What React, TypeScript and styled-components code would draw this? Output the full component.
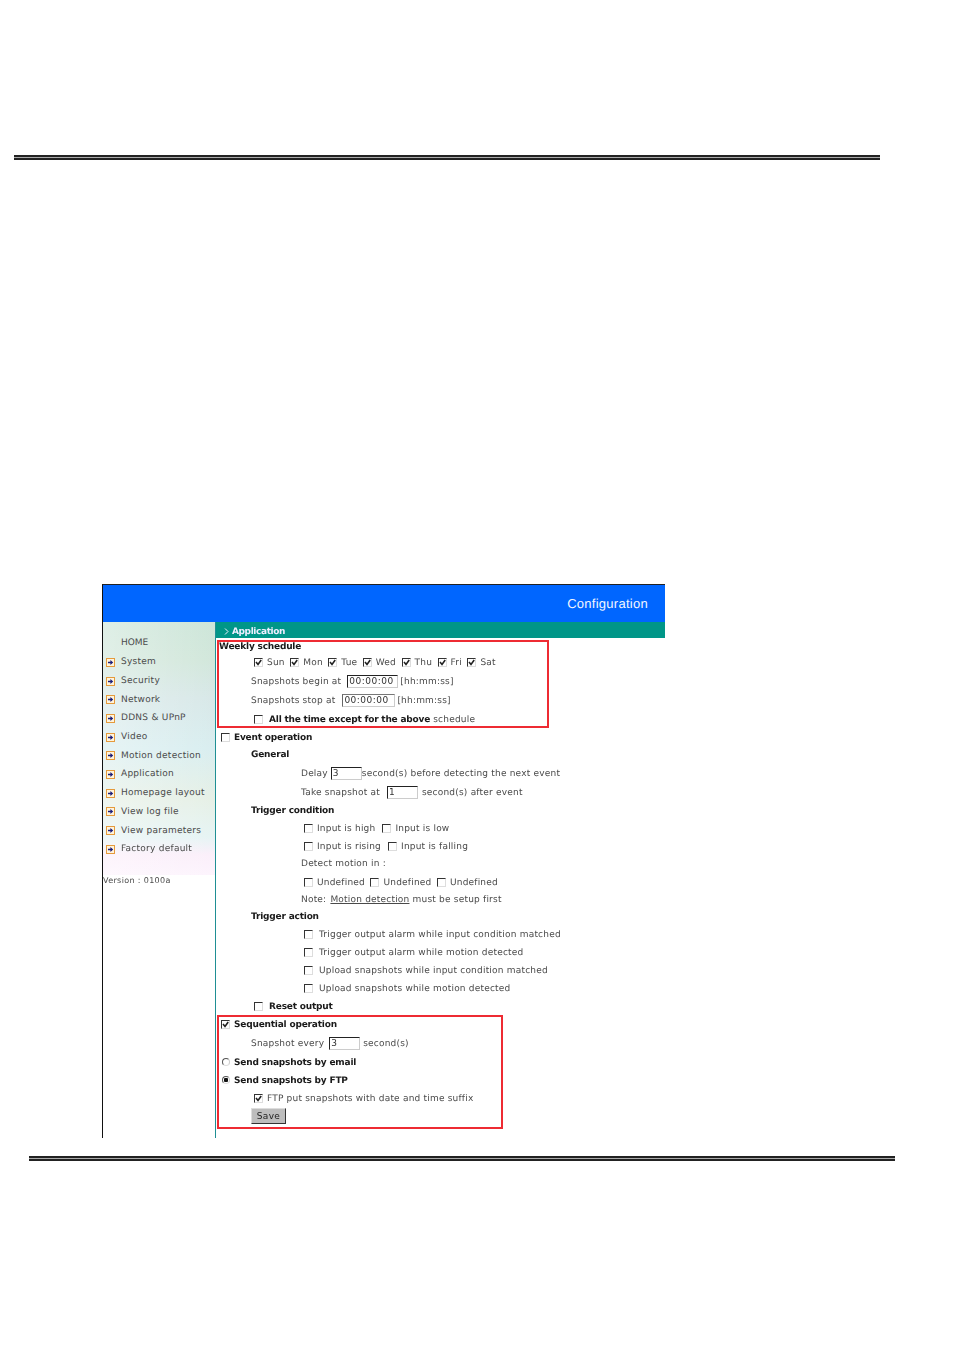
import React from "react";
import styled, { createGlobalStyle } from "styled-components";

const Global = createGlobalStyle`
  html, body { margin: 0; padding: 0; background: #fff; }
  body { font-family: "DejaVu Sans", Verdana, sans-serif; width: 954px; height: 1351px; overflow: hidden; }
`;
const Page = styled.div`
  display: flex;
  flex-direction: column;
  padding-top: 155px;
`;
const Rule = styled.div<{ $left: number }>`
  margin-left: ${(p) => p.$left}px;
  width: 866px;
  height: 5px;
  box-sizing: border-box;
  border-top: 2px solid #222;
  border-bottom: 2px solid #222;
  background: #aaa;
`;
const Shot = styled.div`
  margin: 424px 0 18px 102px;
  width: 563px;
  height: 554px;
  display: flex;
  flex-direction: column;
  box-sizing: border-box;
  border-top: 1px solid #222;
  border-left: 1px solid #111;
  font-size: 9px;
  color: #4a4a4a;
  text-rendering: geometricPrecision;
  filter: blur(0.25px);
`;
const Banner = styled.div`
  height: 37px;
  flex: none;
  background: #0066ff;
  display: flex;
  align-items: center;
  justify-content: flex-end;
  padding: 0 17px 0 0;
  box-sizing: border-box;
  color: #f2f7ff;
  font-size: 13px;
  font-family: "Liberation Sans", Arial, sans-serif;
  letter-spacing: 0.27px;
`;
const Body = styled.div`
  flex: 1;
  display: flex;
  min-height: 0;
`;
const Side = styled.nav`
  width: 112px;
  flex: none;
  display: flex;
  flex-direction: column;
  border-right: 1px solid #1f8f94;
  background: #fff;
`;
const SideTint = styled.div`
  height: 253px;
  padding-top: 16px;
  box-sizing: border-box;
  display: flex;
  flex-direction: column;
  background:
    linear-gradient(90deg, rgba(255, 255, 255, 0.35), rgba(255, 255, 255, 0)),
    linear-gradient(180deg, #cde6d9 0%, #d2e7db 15%, #d8e8e8 30%, #d9eef0 50%, #e6f0e6 70%, #e6f4f4 85%, #fbeffa 92%, #fdf4fd 100%);
`;
const SideSpacer = styled.div`
  height: 5px;
  flex: none;
`;
const SideItem = styled.div`
  height: 18.7px;
  display: flex;
  align-items: center;
  padding-left: 3px;
  gap: 6px;
  letter-spacing: 0.25px;
`;
const Bullet = styled.svg`
  width: 9px;
  height: 9px;
  flex: none;
`;
const HomeText = styled.span`
  margin-left: 18px;
`;
const Version = styled.div`
  padding-top: 1px;
  font-size: 8px;
  letter-spacing: 0.35px;
`;
const Main = styled.main`
  flex: 1;
  display: flex;
  flex-direction: column;
`;
const Strip = styled.div`
  height: 16px;
  flex: none;
  box-sizing: border-box;
  background: #009688;
  color: #eef;
  font-weight: bold;
  display: flex;
  align-items: center;
  gap: 3px;
  padding: 3px 0 0 8px;
  letter-spacing: -0.4px;
`;
const RedBox = styled.section<{ $w: number; $mt: number; $pt: number }>`
  width: ${(p) => p.$w}px;
  box-sizing: border-box;
  margin: ${(p) => p.$mt}px 0 0 1px;
  padding: ${(p) => p.$pt}px 0 2px 0;
  border: 2px solid #ee2b33;
`;
const Row = styled.div<{ $mt: number; $x: number; $bold?: boolean }>`
  height: 8px;
  display: flex;
  align-items: center;
  white-space: nowrap;
  margin-top: ${(p) => p.$mt}px;
  padding-left: ${(p) => p.$x}px;
  font-weight: ${(p) => (p.$bold ? "bold" : "normal")};
  color: ${(p) => (p.$bold ? "#1a1a1a" : "#4a4a4a")};
  letter-spacing: ${(p) => (p.$bold ? "-0.2px" : "0.2px")};
`;
const Opt = styled.span<{ $gap?: number; $mr?: number }>`
  display: inline-flex;
  align-items: center;
  gap: ${(p) => p.$gap ?? 4}px;
  margin-right: ${(p) => p.$mr ?? 5.5}px;
`;
const Box = styled.span`
  width: 9px;
  height: 9px;
  margin-top: -2px;
  flex: none;
  box-sizing: border-box;
  border-top: 1px solid #333;
  border-left: 1px solid #333;
  border-right: 1px solid #ddd;
  border-bottom: 1px solid #ddd;
  display: inline-flex;
  background: #fff;
`;
const Tick = styled.svg`
  width: 7px;
  height: 7px;
`;
const Radio = styled.span<{ $on?: boolean }>`
  width: 8px;
  height: 8px;
  margin-top: -2px;
  flex: none;
  box-sizing: border-box;
  border-radius: 50%;
  border: 1px solid;
  border-color: #555 #ccc #ddd #555;
  background: ${(p) => (p.$on ? "radial-gradient(circle, #111 0 2px, #fff 2.5px)" : "#fff")};
`;
const Field = styled.input<{ $w: number; $l: number; $r: number; $muted?: boolean }>`
  width: ${(p) => p.$w}px;
  height: 13px;
  box-sizing: border-box;
  padding: 0 1px;
  margin: -2px ${(p) => p.$r}px 0 ${(p) => p.$l}px;
  font: 9px "DejaVu Sans", Verdana, sans-serif;
  letter-spacing: 0.5px;
  color: #333;
  outline: none;
  background: #fff;
  border: 1px solid #ccc;
  border-top-color: ${(p) => (p.$muted ? "#777" : "#222")};
  border-left-color: ${(p) => (p.$muted ? "#666" : "#222")};
`;
const Anchor = styled.span`
  text-decoration: underline;
  margin-left: 1px;
`;
const Strong = styled.b`
  color: #1a1a1a;
  letter-spacing: -0.2px;
`;
const SaveButton = styled.button`
  display: block;
  margin: 5px 0 1px 32px;
  width: 35px;
  height: 16px;
  padding: 0;
  font: 9px "DejaVu Sans", Verdana, sans-serif;
  letter-spacing: 0.3px;
  color: #222;
  background: #bdbdbd;
  border: 1px solid;
  border-color: #ddd #333 #333 #ddd;
`;
const Chevron = styled.svg`
  width: 5px;
  height: 7px;
`;

const Check = ({ on }: { on?: boolean }) => (
  <Box>
    {on && (
      <Tick viewBox="0 0 7 7">
        <path d="M1 3 L3 5.4 L6.2 1" fill="none" stroke="#222" strokeWidth="1.6" />
      </Tick>
    )}
  </Box>
);

const Arrow = () => (
  <Bullet viewBox="0 0 9 9">
    <rect x="0.5" y="0.5" width="8" height="8" fill="#fff4dc" stroke="#e59a3c" />
    <path d="M2 3.7 H4.4 V2 L7.2 4.5 L4.4 7 V5.3 H2 Z" fill="#1c1c78" />
  </Bullet>
);

const menu = ["System", "Security", "Network", "DDNS & UPnP", "Video", "Motion detection", "Application", "Homepage layout", "View log file", "View parameters", "Factory default"];
const days = ["Sun", "Mon", "Tue", "Wed", "Thu", "Fri", "Sat"];

export default function App() {
  return (
    <Page>
      <Global />
      <Rule $left={14} />
      <Shot>
        <Banner>Configuration</Banner>
        <Body>
          <Side>
            <SideTint>
              <HomeText>HOME</HomeText>
              <SideSpacer />
              {menu.map((m) => (
                <SideItem key={m}>
                  <Arrow />
                  <span>{m}</span>
                </SideItem>
              ))}
            </SideTint>
            <Version>Version : 0100a</Version>
          </Side>
          <Main>
            <Strip>
              <Chevron viewBox="0 0 5 7">
                <path d="M1 0.5 L4 3.5 L1 6.5" fill="none" stroke="#eef" strokeWidth="1" />
              </Chevron>
              Application
            </Strip>
            <RedBox $w={332} $mt={2} $pt={1}>
              <Row $mt={0} $x={0} $bold>Weekly schedule</Row>
              <Row $mt={8} $x={35}>
                {days.map((d) => (
                  <Opt key={d}>
                    <Check on />
                    {d}
                  </Opt>
                ))}
              </Row>
              <Row $mt={11} $x={32}>
                Snapshots begin at<Field $w={51} $l={6} $r={2} readOnly value="00:00:00" />[hh:mm:ss]
              </Row>
              <Row $mt={11} $x={32}>
                Snapshots stop at<Field $w={53} $l={7} $r={2} $muted readOnly value="00:00:00" />[hh:mm:ss]
              </Row>
              <Row $mt={11} $x={35}>
                <Opt $gap={6}>
                  <Check />
                  <span>
                    <Strong>All the time except for the above</Strong> schedule
                  </span>
                </Opt>
              </Row>
            </RedBox>
            <Row $mt={6} $x={5} $bold>
              <Opt><Check />Event operation</Opt>
            </Row>
            <Row $mt={9} $x={35} $bold>General</Row>
            <Row $mt={11} $x={85}>
              Delay<Field $w={31} $l={3} $r={0} readOnly value="3" />second(s) before detecting the next event
            </Row>
            <Row $mt={11} $x={85}>
              Take snapshot at<Field $w={31} $l={7} $r={4} readOnly value="1" />second(s) after event
            </Row>
            <Row $mt={10} $x={35} $bold>Trigger condition</Row>
            <Row $mt={10} $x={88}>
              <Opt $mr={7}><Check />Input is high</Opt>
              <Opt><Check />Input is low</Opt>
            </Row>
            <Row $mt={10} $x={88}>
              <Opt $mr={7}><Check />Input is rising</Opt>
              <Opt><Check />Input is falling</Opt>
            </Row>
            <Row $mt={9} $x={85}>Detect motion in :</Row>
            <Row $mt={11} $x={88}>
              <Opt><Check />Undefined</Opt>
              <Opt><Check />Undefined</Opt>
              <Opt><Check />Undefined</Opt>
            </Row>
            <Row $mt={9} $x={85}>
              Note:&nbsp;<Anchor>Motion detection</Anchor>&nbsp;must be setup first
            </Row>
            <Row $mt={9} $x={35} $bold>Trigger action</Row>
            <Row $mt={10} $x={88}><Opt $gap={6}><Check />Trigger output alarm while input condition matched</Opt></Row>
            <Row $mt={10} $x={88}><Opt $gap={6}><Check />Trigger output alarm while motion detected</Opt></Row>
            <Row $mt={10} $x={88}><Opt $gap={6}><Check />Upload snapshots while input condition matched</Opt></Row>
            <Row $mt={10} $x={88}><Opt $gap={6}><Check />Upload snapshots while motion detected</Opt></Row>
            <Row $mt={10} $x={38} $bold><Opt $gap={6}><Check />Reset output</Opt></Row>
            <RedBox $w={286} $mt={4} $pt={4}>
              <Row $mt={0} $x={2} $bold><Opt><Check on />Sequential operation</Opt></Row>
              <Row $mt={11} $x={32}>
                Snapshot every<Field $w={31} $l={5} $r={3} readOnly value="3" />second(s)
              </Row>
              <Row $mt={11} $x={3} $bold>
                <Opt><Radio />Send snapshots by email</Opt>
              </Row>
              <Row $mt={10} $x={3} $bold>
                <Opt><Radio $on />Send snapshots by FTP</Opt>
              </Row>
              <Row $mt={10} $x={35}><Opt><Check on />FTP put snapshots with date and time suffix</Opt></Row>
              <SaveButton>Save</SaveButton>
            </RedBox>
          </Main>
        </Body>
      </Shot>
      <Rule $left={29} />
    </Page>
  );
}
